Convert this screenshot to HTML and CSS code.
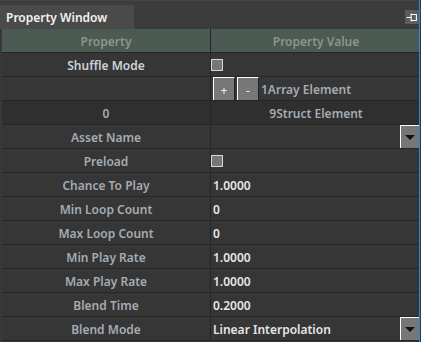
FILE: index.html
```html
<!DOCTYPE html>
<html lang="en">
<head>
  <meta charset="UTF-8">
  <title>Property Window</title>
  <link rel="stylesheet" href="styles.css">
</head>
<body>
  <div class="window">
    <div class="panel">
      <div class="titlebar">
        <div class="tab">Property Window</div>
        <div class="pin">
          <svg width="16" height="13" viewBox="0 0 16 13">
            <path d="M2 6.5H7M7 2V11M7 3H13V10H7" fill="none" stroke="#fff" stroke-width="1.2"/>
          </svg>
        </div>
      </div>

      <div class="grid">
        <div class="row head"><div class="name">Property</div><div class="value center">Property Value</div></div>
        <div class="row"><div class="name bright">Shuffle Mode</div><div class="value"><span class="check"></span></div></div>
        <div class="row"><div class="name"></div><div class="value"><span class="btn">+</span><span class="btn">-</span><span class="dim">1Array Element</span></div></div>
        <div class="row struct"><div class="name">0</div><div class="value center"><span class="dim">9Struct Element</span></div></div>
        <div class="row"><div class="name">Asset Name</div><div class="value"><span class="drop"></span></div></div>
        <div class="row"><div class="name">Preload</div><div class="value"><span class="check"></span></div></div>
        <div class="row"><div class="name">Chance To Play</div><div class="value">1.0000</div></div>
        <div class="row"><div class="name">Min Loop Count</div><div class="value">0</div></div>
        <div class="row"><div class="name">Max Loop Count</div><div class="value">0</div></div>
        <div class="row"><div class="name">Min Play Rate</div><div class="value">1.0000</div></div>
        <div class="row"><div class="name">Max Play Rate</div><div class="value">1.0000</div></div>
        <div class="row"><div class="name">Blend Time</div><div class="value">0.2000</div></div>
        <div class="row"><div class="name">Blend Mode</div><div class="value">Linear Interpolation<span class="drop"></span></div></div>
      </div>
    </div>
    <div class="edge"></div>
  </div>
</body>
</html>
```
FILE: styles.css
```css
body {
  margin: 0;
  background-color: #383838;
  font-family: "Noto Sans", sans-serif;
  font-size: 12px;
  font-weight: 600;
  overflow: hidden;
}

.window {
  display: flex;
  height: 342px;
}

.panel {
  width: 419px;
}

.edge {
  width: 1px;
  background-color: #2f86d6;
}

.titlebar {
  height: 29px;
  background-color: #3c3c3c;
  border-top: 1px solid #454545;
  box-sizing: border-box;
  display: flex;
  justify-content: space-between;
}

.tab {
  margin-top: 4px;
  width: 134px;
  height: 24px;
  background-color: #4a4a4a;
  color: #f2f2f2;
  padding: 2px 0 0 6px;
  box-sizing: border-box;
  line-height: 22px;
}

.pin {
  margin-top: 9px;
  width: 14px;
  height: 14px;
  background-color: #5c5c5c;
  display: flex;
  align-items: center;
  justify-content: center;
}

.grid {
  margin-left: 2px;
}

.row {
  display: flex;
  height: 24px;
  background-color: #363636;
  border-bottom: 1px solid #262626;
  box-sizing: border-box;
}

.row .name {
  width: 208px;
  border-right: 1px solid #262626;
  text-align: center;
  padding-top: 2px;
  line-height: 21px;
  color: #a4acb4;
}

.row .value {
  flex: 1;
  display: flex;
  align-items: center;
  padding: 2px 0 0 2px;
  color: #e6e6e6;
  position: relative;
}

.row .value.center {
  justify-content: center;
}

.row .name.bright {
  color: #ccd2da;
}

.row.head {
  background-color: #4b5a52;
}

.row.head .name,
.row.head .value {
  color: #8f948f;
}

.row.struct {
  background-color: #2f2f2f;
}

.dim {
  color: #a4acb4;
}

.check {
  width: 10px;
  height: 10px;
  margin: -2px 0 0 -2px;
  background-color: #777;
  border: 1px solid #d8d8d8;
}

.btn {
  width: 20px;
  height: 22px;
  margin: -2px 2px 0 0;
  background-color: #777;
  border-top: 1px solid #fff;
  border-left: 1px solid #fff;
  border-right: 1px solid #222;
  color: #f0f0f0;
  text-align: center;
  line-height: 26px;
  font-weight: normal;
}

.drop {
  position: absolute;
  right: 0;
  top: 0;
  width: 19px;
  height: 23px;
  background-color: #777;
  border-top: 1px solid #fff;
  border-left: 1px solid #fff;
  box-sizing: border-box;
}

.drop::after {
  content: "";
  position: absolute;
  left: 4px;
  top: 9px;
  border-left: 5px solid transparent;
  border-right: 5px solid transparent;
  border-top: 5px solid #111;
}
```
